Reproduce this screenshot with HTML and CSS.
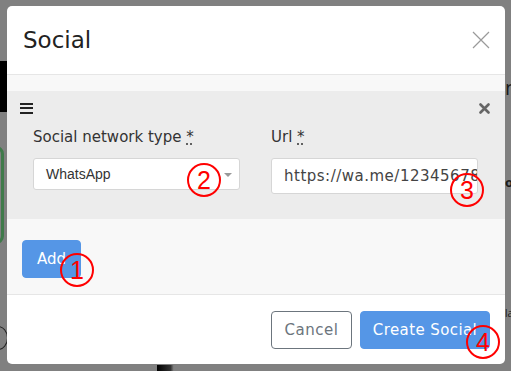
FILE: index.html
```html
<!DOCTYPE html>
<html lang="en">
<head>
<meta charset="utf-8">
<title>Social</title>
<link rel="stylesheet" href="styles.css">
</head>
<body>
<div class="page-bits">
  <div class="bit bit-black"></div>
  <div class="bit bit-green"></div>
  <div class="bit bit-ring"></div>
  <div class="bit bit-n">n</div>
  <div class="bit bit-o">o:</div>
  <div class="bit bit-la">la</div>
  <div class="bit bit-bar"></div>
</div>
<div class="modal">
  <div class="modal-header">
    <h1 class="modal-title">Social</h1>
    <button class="close" aria-label="Close">
      <svg width="18" height="18" viewBox="0 0 18 18"><path d="M1 1L17 17M17 1L1 17" stroke="#9a9a9a" stroke-width="1.2" fill="none"/></svg>
    </button>
  </div>
  <div class="modal-body">
    <div class="item">
      <div class="item-top">
        <span class="handle"><i></i><i></i><i></i></span>
        <svg class="remove" width="11" height="11" viewBox="0 0 11 11"><path d="M1.5 1.5L9.5 9.5M9.5 1.5L1.5 9.5" stroke="#666" stroke-width="2.6" stroke-linecap="round" fill="none"/></svg>
      </div>
      <div class="fields">
        <div class="field">
          <label class="label">Social network type <abbr title="required">*</abbr></label>
          <div class="select">WhatsApp<span class="caret"></span></div>
        </div>
        <div class="field">
          <label class="label">Url <abbr title="required">*</abbr></label>
          <div class="input">https://wa.me/12345678</div>
        </div>
      </div>
    </div>
    <div class="add-row">
      <button class="btn btn-primary">Add</button>
    </div>
  </div>
  <div class="modal-footer">
    <button class="btn btn-outline">Cancel</button>
    <button class="btn btn-primary">Create Social</button>
  </div>
</div>
<span class="mark m1">1</span>
<span class="mark m2">2</span>
<span class="mark m3">3</span>
<span class="mark m4">4</span>
</body>
</html>
```
FILE: styles.css
```css
html, body {
  margin: 0;
  padding: 0;
}
body {
  width: 511px;
  height: 371px;
  overflow: hidden;
  background: #808080;
  position: relative;
  font-family: "DejaVu Sans", "Open Sans", sans-serif;
}
.page-bits .bit { position: absolute; }
.bit-black { left: 0; top: 61px; width: 8px; height: 51px; background: #000; }
.bit-green { left: -20px; top: 146px; width: 18px; height: 92px; border: 3px solid #3f7a4a; border-radius: 8px; }
.bit-ring { left: -12px; top: 326px; width: 18px; height: 22px; border: 1px solid #222; border-radius: 50%; }
.bit-n { left: 505px; top: 78px; font: 20px "Open Sans", sans-serif; color: #1a1a1a; line-height: 1; }
.bit-o { left: 505px; top: 176px; font: bold 13px "Open Sans", sans-serif; color: #1a1a1a; line-height: 1; }
.bit-la { left: 505px; top: 308px; font: 10px "Open Sans", sans-serif; color: #1a1a1a; line-height: 1; }
.bit-bar { left: 157px; top: 365px; width: 17px; height: 6px; background: linear-gradient(90deg, #000, #333 80%, #888); }

.modal {
  position: relative;
  margin: 6px 0 0 7px;
  width: 498px;
  height: 358px;
  background: #fff;
  border-radius: 5px;
  overflow: hidden;
  display: flex;
  flex-direction: column;
}
.modal-header {
  height: 68px;
  border-bottom: 1px solid #e6e6e6;
  display: flex;
  align-items: center;
  justify-content: space-between;
  padding: 0 15px 0 16px;
  box-sizing: content-box;
  flex: none;
}
.modal-title {
  margin: 0;
  font-size: 23px;
  font-weight: normal;
  color: #222;
}
.close {
  border: 0;
  background: none;
  padding: 0;
  width: 18px;
  height: 18px;
  display: flex;
}
.modal-body {
  background: #f8f8f8;
  padding: 16px 0 0;
  height: 219px;
  box-sizing: border-box;
  flex: none;
}
.item {
  background: #ececec;
  height: 128px;
  box-sizing: border-box;
  padding: 11px 15px 0 13px;
}
.item-top {
  display: flex;
  justify-content: space-between;
  align-items: center;
  height: 12px;
}
.handle {
  display: flex;
  flex-direction: column;
  justify-content: space-between;
  width: 13px;
  height: 11px;
}
.handle i {
  display: block;
  height: 2px;
  background: #222;
}
.remove { display: block; }
.fields {
  display: grid;
  grid-template-columns: 207px 207px;
  column-gap: 31px;
  padding-left: 13px;
  margin-top: 13px;
}
.label {
  display: block;
  font-size: 15px;
  color: #333;
  line-height: 20px;
  height: 20px;
  margin-bottom: 11px;
}
.label abbr {
  text-decoration: underline dotted;
  text-underline-offset: 2px;
}
.select {
  position: relative;
  height: 32px;
  box-sizing: border-box;
  background: #fff;
  border: 1px solid #d6d6d6;
  border-radius: 3px;
  padding: 0 12px;
  font-family: "Liberation Sans", Arial, sans-serif;
  font-size: 14px;
  line-height: 30px;
  color: #333;
}
.caret {
  position: absolute;
  right: 7px;
  top: 14px;
  border-left: 4px solid transparent;
  border-right: 4px solid transparent;
  border-top: 4px solid #999;
}
.input {
  height: 36px;
  box-sizing: border-box;
  background: #fff;
  border: 1px solid #d6d6d6;
  border-radius: 3px;
  padding: 0 12px;
  font-size: 15px;
  letter-spacing: 0.5px;
  line-height: 34px;
  color: #444;
  white-space: nowrap;
  overflow: hidden;
}
.add-row {
  padding: 21px 15px 0;
}
.btn {
  height: 38px;
  border-radius: 4px;
  font-family: "DejaVu Sans", sans-serif;
  font-size: 15px;
  padding: 0;
  cursor: pointer;
}
.btn-primary {
  background: #5596e6;
  border: 1px solid #5596e6;
  color: #fff;
}
.add-row .btn { width: 59px; }
.modal-footer {
  flex: 1;
  border-top: 1px solid #e6e6e6;
  display: flex;
  justify-content: flex-end;
  align-items: flex-start;
  gap: 8px;
  padding: 16px 15px 0;
}
.btn-outline {
  background: #fff;
  border: 1px solid #6c757d;
  color: #6c757d;
  width: 81px;
  letter-spacing: 0.5px;
}
.modal-footer .btn-primary { width: 130px; letter-spacing: 0.4px; }

.mark {
  position: absolute;
  width: 34px;
  height: 34px;
  border: 2px solid #f00;
  border-radius: 50%;
  box-sizing: border-box;
  color: #f00;
  font-family: "Liberation Sans", Arial, sans-serif;
  font-size: 25px;
  line-height: 30px;
  text-align: center;
}
.m1 { left: 60px; top: 253px; }
.m2 { left: 187px; top: 163px; }
.m3 { left: 450px; top: 173px; }
.m4 { left: 466px; top: 325px; }
```
